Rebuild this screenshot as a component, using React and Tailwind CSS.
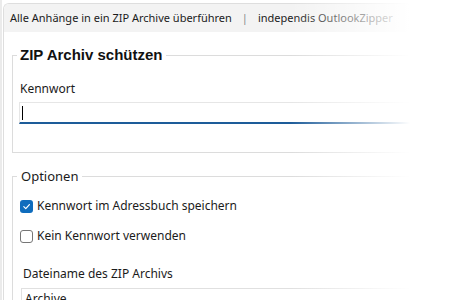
function Checkbox({ checked }) {
  if (checked) {
    return (
      <span className="w-[13px] h-[13px] rounded-[3px] bg-[#0f6cbd] flex items-center justify-center shrink-0">
        <svg width="9" height="9" viewBox="0 0 10 10" fill="none">
          <path d="M2 5.2 L4.2 7.3 L8.2 2.8" stroke="white" strokeWidth="1.3" strokeLinecap="round" strokeLinejoin="round" />
        </svg>
      </span>
    );
  }
  return <span className="w-[13px] h-[13px] rounded-[3px] border border-[#767676] bg-white shrink-0" />;
}

export default function App() {
  const ui = { fontFamily: '"Noto Sans", "Open Sans", sans-serif' };
  const bold = { fontFamily: '"Liberation Sans", Arial, sans-serif' };

  return (
    <div className="relative w-[450px] h-[300px] overflow-hidden bg-white flex" style={ui}>
      <div className="w-[2px] bg-[#ebebeb] shrink-0" />
      <div className="flex-1 flex flex-col mt-[3px] ml-[1px] border-l border-t border-[#dedede] rounded-tl-[6px] overflow-hidden">
        <div className="h-[28px] bg-[#f3f3f3] flex items-center pl-[6px] text-[11px] text-[#1b1b1b] shrink-0 whitespace-nowrap">
          <span>Alle Anhänge in ein ZIP Archive überführen</span>
          <span className="mx-[10px] text-[#8a8a8a]">|</span>
          <span>independis OutlookZipper</span>
        </div>

        <div className="flex flex-col px-[8px] pt-[14px]">
          <fieldset className="border border-[#dcdcdc] h-[107px] w-[440px] px-[4px]">
            <legend className="px-[3px] text-[15px] font-bold text-[#111] leading-[18px]" style={bold}>
              ZIP Archiv schützen
            </legend>
            <div className="pl-[3px] text-[12px] text-[#1b1b1b] mt-[17px] leading-[16px]">Kennwort</div>
            <div className="ml-[2px] mt-[5px] h-[22px] border-t border-x border-[#e6e6e6] border-b-2 border-b-[#1d5c99] flex items-center pl-[2px]">
              <span className="w-[1px] h-[14px] bg-black" />
            </div>
          </fieldset>

          <fieldset className="mt-[14px] border border-[#dcdcdc] h-[150px] w-[440px] px-[4px]">
            <legend className="px-[4px] text-[13px] text-[#1b1b1b] leading-[18px]">Optionen</legend>
            <div className="pl-[3px] flex flex-col gap-[16px] mt-[14px] text-[12px] text-[#1b1b1b] leading-[14px]">
              <label className="flex items-center gap-[4px]">
                <Checkbox checked />
                <span>Kennwort im Adressbuch speichern</span>
              </label>
              <label className="flex items-center gap-[4px]">
                <Checkbox checked={false} />
                <span>Kein Kennwort verwenden</span>
              </label>
            </div>
            <div className="mt-[23px] pl-[6px] text-[12px] text-[#1b1b1b] leading-[16px]">Dateiname des ZIP Archivs</div>
            <div className="mt-[6px] ml-[4px] h-[24px] border border-[#e0e0e0] pl-[3px] text-[12px] text-[#1b1b1b] leading-[20px]">
              Archive
            </div>
          </fieldset>
        </div>
      </div>
      <div className="absolute top-0 right-0 h-full w-[160px] bg-[linear-gradient(to_right,rgba(255,255,255,0),#ffffff_75%)]" />
    </div>
  );
}
